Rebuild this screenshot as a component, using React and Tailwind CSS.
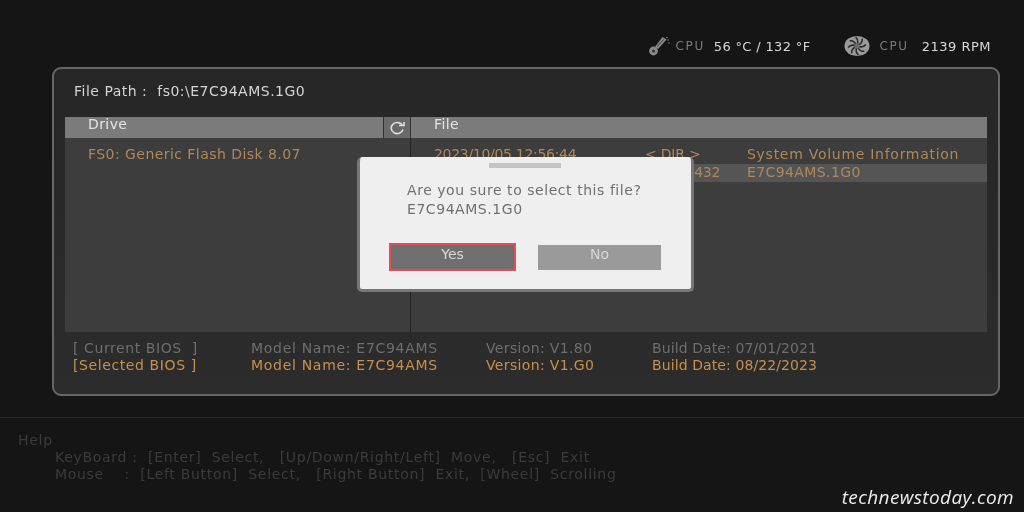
import React from "react";

const Thermo = () => (
  <svg width="24" height="22" viewBox="0 0 24 22" fill="none" className="shrink-0">
    <path d="M14.5 2 L18.5 4.5 L10 14 L7 12 Z" fill="#8a8a8a" />
    <path d="M15.5 4.5 L9.5 11.5" stroke="#2a2a2a" strokeWidth="0.8" />
    <circle cx="5.5" cy="16" r="4.4" fill="#8a8a8a" />
    <circle cx="5.5" cy="16" r="1.5" fill="#333" />
    <path d="M19 5h2M20 8h2M18 2.5h2" stroke="#666" strokeWidth="1" />
  </svg>
);

const Fan = () => {
  const blades = [0, 45, 90, 135, 180, 225, 270, 315];
  return (
    <svg width="26" height="22" viewBox="0 0 27 22" className="shrink-0">
      <ellipse cx="13.5" cy="11" rx="13" ry="10.5" fill="#9a9a9a" />
      {blades.map((a) => (
        <path key={a} d="M13.5 11 C15 7 15 4 12 1.8" stroke="#2a2a2a" strokeWidth="1.6" fill="none" transform={`rotate(${a} 13.5 11)`} />
      ))}
      <circle cx="13.5" cy="11" r="2.8" fill="#6a6a6a" />
    </svg>
  );
};

export default function App() {
  return (
    <div className="relative w-[1024px] h-[512px] overflow-hidden bg-[#151515] text-[14px] font-['DejaVu_Sans',sans-serif] leading-[17px] blur-[0.4px]">
      <div className="h-[67px] flex items-center justify-end pr-[33px] pt-[31px] pb-[6px] text-[#d8d8d8] text-[13px] tracking-[0.5px]">
        <div className="flex items-center">
          <Thermo />
          <span className="ml-[4px] text-[12px] text-[#7a7a7a] tracking-[1.6px]">CPU</span>
          <span className="ml-[9px] tracking-[0.35px]">56 °C / 132 °F</span>
        </div>
        <div className="flex items-center ml-[34px]">
          <Fan />
          <span className="ml-[9px] text-[12px] text-[#7a7a7a] tracking-[1.6px]">CPU</span>
          <span className="ml-[13px]">2139 RPM</span>
        </div>
      </div>

      <div className="ml-[52px] w-[948px] h-[329px] rounded-[9px] border-2 border-[#666] bg-gradient-to-b from-[#262626] to-[#2c2c2c] px-[11px]">
        <div className="h-[48px] pt-[14px] pl-[9px] text-[#d4d4d4] tracking-[0.5px]">File Path :&nbsp; fs0:\E7C94AMS.1G0</div>

        <div className="flex h-[21px] bg-[#7b7b7b] text-[#e4e4e4] leading-[15px] tracking-[0.4px]">
          <div className="w-[318px] pl-[23px]">Drive</div>
          <div className="w-[28px] flex items-center justify-center bg-[#6a6a6a] border-x border-[#333]">
            <svg width="18" height="14" viewBox="0 0 18 14" fill="none" stroke="#ddd" strokeWidth="1.6">
              <path d="M14.5 4.5A6 5.5 0 1 0 15 8.5" />
              <path d="M11 4.5h5V1" />
            </svg>
          </div>
          <div className="flex-1 pl-[23px]">File</div>
        </div>

        <div className="flex h-[194px] bg-[#3d3d3d] text-[#b08858]">
          <div className="w-[346px] border-r border-[#222] pt-[8px] pl-[23px] tracking-[0.45px]">FS0: Generic Flash Disk 8.07</div>
          <div className="flex-1 pt-[8px]">
            <div className="h-[18px] flex pl-[23px]">
              <span className="w-[211px] tracking-[-0.3px]">2023/10/05 12:56:44</span>
              <span className="w-[102px] tracking-[-0.2px]">&lt; DIR &gt;</span>
              <span className="tracking-[0.72px]">System Volume Information</span>
            </div>
            <div className="h-[18px] flex pl-[23px] bg-[#555]">
              <span className="w-[211px]"></span>
              <span className="w-[102px] text-right pr-[27px] tracking-[-0.3px]">432</span>
              <span className="tracking-[0.4px]">E7C94AMS.1G0</span>
            </div>
          </div>
        </div>

        <div className="pt-[8px] grid grid-cols-[178px_235px_166px_1fr] pl-[8px] text-[#6e6e6e]">
          <span className="tracking-[0.58px]">[ Current BIOS&nbsp; ]</span>
          <span className="tracking-[0.7px]">Model Name: E7C94AMS</span>
          <span className="tracking-[0.35px]">Version: V1.80</span>
          <span className="tracking-[0.1px]">Build Date: 07/01/2021</span>
          <span className="text-[#c8904a] tracking-[0.6px]">[Selected BIOS ]</span>
          <span className="text-[#c8904a] tracking-[0.7px]">Model Name: E7C94AMS</span>
          <span className="text-[#c8904a] tracking-[0.35px]">Version: V1.G0</span>
          <span className="text-[#c8904a] tracking-[0.1px]">Build Date: 08/22/2023</span>
        </div>
      </div>

      <div className="mt-[21px] border-t border-[#2b2b2b] pl-[18px] pt-[14px] text-[#3b3b3b] tracking-[0.7px]">
        <div>Help</div>
        <div className="pl-[37px] whitespace-pre">KeyBoard :&nbsp; [Enter]&nbsp; Select,&nbsp; &nbsp;[Up/Down/Right/Left]&nbsp; Move,&nbsp; &nbsp;[Esc]&nbsp; Exit</div>
        <div className="pl-[37px] whitespace-pre">Mouse&nbsp; &nbsp; :&nbsp; [Left Button]&nbsp; Select,&nbsp; &nbsp;[Right Button]&nbsp; Exit,&nbsp; [Wheel]&nbsp; Scrolling</div>
      </div>

      <div className="absolute left-[357px] top-[157px] w-[337px] h-[135px] rounded-[5px] bg-[#efefef] border-[3px] border-t-0 border-[#777] pl-[47px] pr-[30px] text-[#707070]">
        <div className="absolute left-[129px] top-[6px] w-[72px] h-[5px] bg-[#c4c4c4]" />
        <div className="pt-[24px] text-[14px] leading-[19px] tracking-[0.55px]">
          <div>Are you sure to select this file?</div>
          <div>E7C94AMS.1G0</div>
        </div>
        <div className="flex mt-[24px] -ml-[18px] gap-[22px] text-[#d8d8d8] text-[14px] items-center">
          <div className="w-[127px] h-[28px] border-2 border-[#e0505a] bg-[#6f6f6f] flex items-center justify-center pb-[5px]">Yes</div>
          <div className="w-[123px] h-[25px] bg-[#9a9a9a] flex items-center justify-center pb-[5px]">No</div>
        </div>
      </div>

      <div className="absolute right-[10px] top-[486px] font-['Open_Sans',sans-serif] italic text-[#eee] text-[19px] leading-[22px] tracking-[0.4px]">technewstoday.com</div>
    </div>
  );
}
